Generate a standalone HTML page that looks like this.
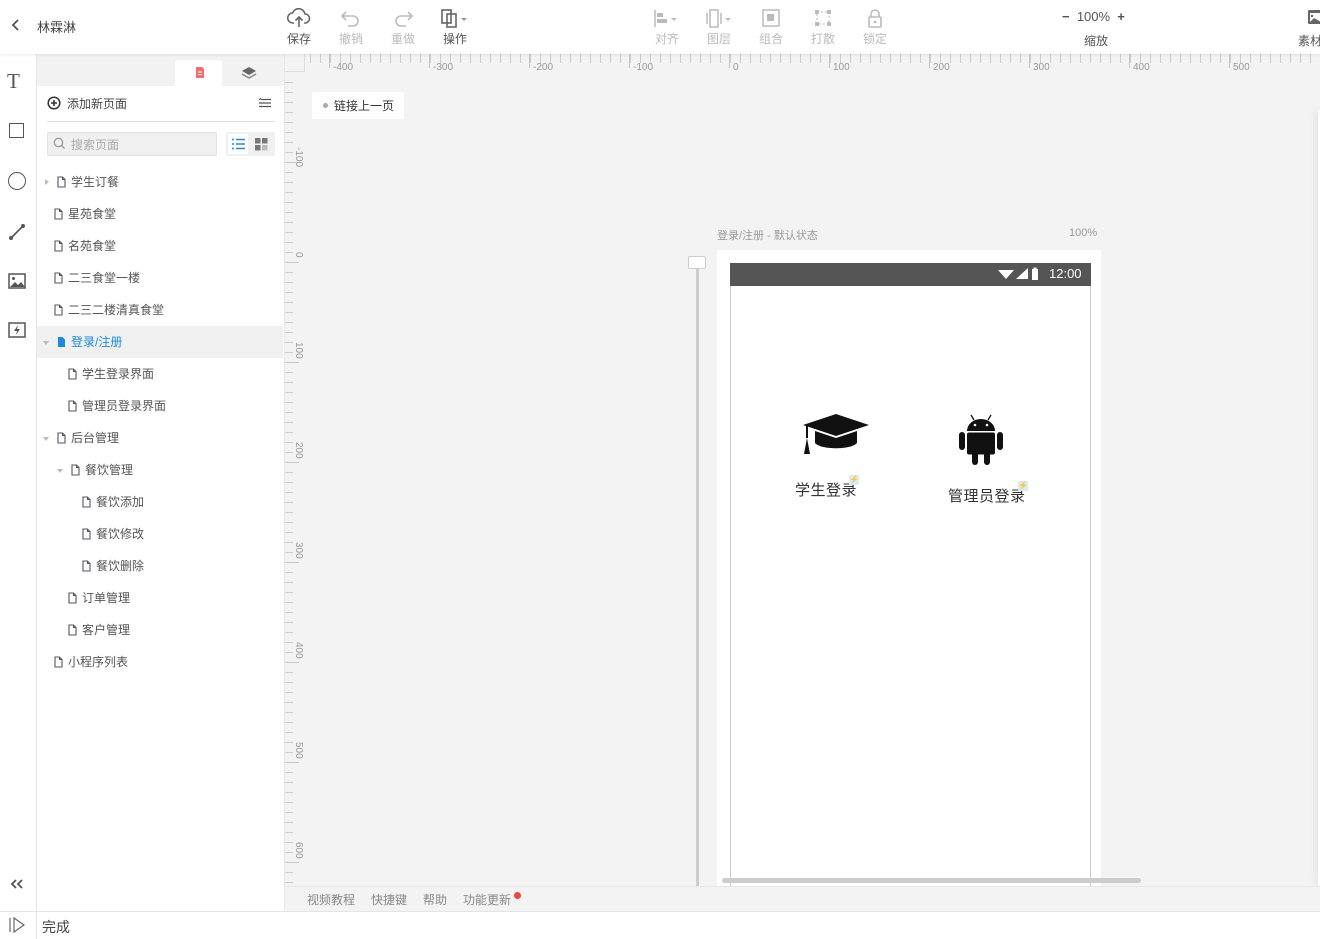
<!DOCTYPE html>
<html><head><meta charset="utf-8"><style>
*{margin:0;padding:0;box-sizing:border-box}
body{width:1320px;height:939px;overflow:hidden;background:#f3f3f3;font-family:"Liberation Sans","Noto Sans CJK SC",sans-serif;font-size:12px;color:#333;position:relative}
.a{position:absolute}
.tb{position:absolute;top:3px;text-align:center;font-size:12px;color:#555;width:40px}
.tb.d{color:#bbb}
.tb svg{display:block;margin:5px auto 0}
.tb span{display:block;margin-top:2px}
.it{position:absolute;font-size:12px;color:#555;height:16px;line-height:16px;white-space:nowrap}
.it svg{position:absolute;top:2px}
.arr{position:absolute;width:0;height:0}
</style></head><body>
<!-- top bar -->
<div class="a" style="left:0;top:0;width:1320px;height:54px;background:#fff;box-shadow:0 1px 3px rgba(0,0,0,.08);z-index:3">
 <svg class="a" style="left:11px;top:19px" width="10" height="12" viewBox="0 0 10 12"><path d="M7 1L2 6l5 5" stroke="#555" stroke-width="1.8" fill="none"/></svg>
 <div class="a" style="left:37px;top:17px;font-size:13px;color:#444">林霖淋</div>
 <div class="tb" style="left:279px"><svg width="24" height="20" viewBox="0 0 24 20"><path d="M7 15H6a5 5 0 0 1-.5-10A6.5 6.5 0 0 1 18 6a4.5 4.5 0 0 1 0 9h-1" fill="none" stroke="#666" stroke-width="1.6"/><path d="M12 19V9M8.5 12.5L12 9l3.5 3.5" fill="none" stroke="#666" stroke-width="1.6"/></svg><span>保存</span></div>
 <div class="tb d" style="left:331px"><svg width="22" height="20" viewBox="0 0 22 20"><path d="M6 4L2 8l4 4M2 8h11a5 5 0 0 1 0 10H8" fill="none" stroke="#bbb" stroke-width="1.6"/></svg><span>撤销</span></div>
 <div class="tb d" style="left:383px"><svg width="22" height="20" viewBox="0 0 22 20"><path d="M16 4l4 4-4 4M20 8H9a5 5 0 0 0 0 10h5" fill="none" stroke="#bbb" stroke-width="1.6"/></svg><span>重做</span></div>
 <div class="tb" style="left:435px"><svg width="32" height="20" viewBox="0 0 32 20"><rect x="3" y="2" width="9" height="13" fill="none" stroke="#666" stroke-width="1.6"/><rect x="8" y="6" width="9" height="13" fill="none" stroke="#666" stroke-width="1.6"/><path d="M22 10h6l-3 3z" fill="#999"/></svg><span>操作</span></div>
 <div class="tb d" style="left:647px"><svg width="32" height="20" viewBox="0 0 32 20"><path d="M4 2v17" stroke="#bbb" stroke-width="1.5"/><rect x="6" y="5" width="6" height="4" fill="#bbb"/><rect x="6" y="11" width="10" height="4" fill="#bbb"/><path d="M20 10h6l-3 3z" fill="#bbb"/></svg><span>对齐</span></div>
 <div class="tb d" style="left:699px"><svg width="32" height="20" viewBox="0 0 32 20"><rect x="7" y="2" width="8" height="17" fill="none" stroke="#bbb" stroke-width="1.5"/><path d="M4 5v11M18 5v11" stroke="#bbb" stroke-width="1.5"/><path d="M22 10h6l-3 3z" fill="#bbb"/></svg><span>图层</span></div>
 <div class="tb d" style="left:751px"><svg width="20" height="20" viewBox="0 0 20 20"><rect x="2" y="2" width="16" height="16" fill="none" stroke="#bbb" stroke-width="1.5"/><rect x="6" y="6" width="7" height="7" fill="#bbb"/></svg><span>组合</span></div>
 <div class="tb d" style="left:803px"><svg width="20" height="20" viewBox="0 0 20 20"><rect x="4" y="4" width="12" height="12" fill="none" stroke="#bbb" stroke-width="1" stroke-dasharray="2 2"/><rect x="2" y="2" width="4" height="4" fill="#bbb"/><rect x="14" y="2" width="4" height="4" fill="#bbb"/><rect x="2" y="14" width="4" height="4" fill="#bbb"/><rect x="14" y="14" width="4" height="4" fill="#bbb"/></svg><span>打散</span></div>
 <div class="tb d" style="left:855px"><svg width="20" height="20" viewBox="0 0 20 20"><path d="M6 9V6a4 4 0 0 1 8 0v3" fill="none" stroke="#bbb" stroke-width="1.6"/><rect x="4" y="9" width="12" height="10" rx="1" fill="none" stroke="#bbb" stroke-width="1.6"/><circle cx="10" cy="14" r="1.3" fill="#bbb"/></svg><span>锁定</span></div>
 <div class="a" style="left:1062px;top:9px;font-size:13px;color:#555;white-space:nowrap"><b style="font-weight:bold">−</b>&nbsp; 100% &nbsp;<b>+</b></div>
 <div class="a" style="left:1084px;top:32px;font-size:12px;color:#555">缩放</div>
 <svg class="a" style="left:1307px;top:9px" width="14" height="16" viewBox="0 0 14 16"><rect x="1" y="1" width="14" height="14" rx="1" fill="#666"/><rect x="3" y="4" width="11" height="9" fill="#fff"/><circle cx="5" cy="7" r="1.2" fill="#666"/><path d="M3 13l4-4 7 4z" fill="#666"/></svg>
 <div class="a" style="left:1298px;top:32px;font-size:12px;color:#555;white-space:nowrap">素材</div>
</div>
<!-- left tools -->
<div class="a" style="left:0;top:54px;width:37px;height:857px;background:#fff;border-right:1px solid #e4e4e4">
 <div class="a" style="left:7px;top:15px;font-family:'Liberation Serif',serif;font-size:21px;color:#555">T</div>
 <div class="a" style="left:9px;top:69px;width:15px;height:15px;border:1.5px solid #555"></div>
 <div class="a" style="left:8px;top:118px;width:18px;height:18px;border:1.5px solid #555;border-radius:50%"></div>
 <svg class="a" style="left:8px;top:169px" width="18" height="18" viewBox="0 0 18 18"><path d="M3 15L15 3" stroke="#555" stroke-width="1.6"/><circle cx="3" cy="15" r="2" fill="#555"/><circle cx="15" cy="3" r="2" fill="#555"/></svg>
 <svg class="a" style="left:8px;top:219px" width="18" height="16" viewBox="0 0 18 16"><rect x="1" y="1" width="16" height="14" fill="none" stroke="#555" stroke-width="1.5"/><circle cx="5.5" cy="5.5" r="1.5" fill="#555"/><path d="M2 14l5-5 3 3 3-3 4 5z" fill="#555"/></svg>
 <svg class="a" style="left:8px;top:268px" width="18" height="16" viewBox="0 0 18 16"><rect x="1" y="1" width="16" height="14" fill="none" stroke="#555" stroke-width="1.5"/><path d="M10 3L6 9h3l-1 4 4-6H9z" fill="#555"/></svg>
 <svg class="a" style="left:10px;top:824px" width="14" height="12" viewBox="0 0 14 12"><path d="M6 2L2 6l4 4M12 2L8 6l4 4" fill="none" stroke="#555" stroke-width="1.8"/></svg>
</div>
<!-- sidebar -->
<div class="a" style="left:37px;top:54px;width:248px;height:857px;background:#fff">
 <div class="a" style="left:0;top:0;width:248px;height:32px;background:#f2f2f2"></div>
 <div class="a" style="left:138px;top:6px;width:47px;height:26px;background:#fff;border-radius:3px 3px 0 0"></div>
 <svg class="a" style="left:158px;top:12px" width="10" height="13" viewBox="0 0 10 13"><path d="M1 1h6l2 2v9H1z" fill="#f56c6c"/><path d="M3 6h4M3 8.5h4" stroke="#fff" stroke-width="1"/></svg>
 <svg class="a" style="left:204px;top:12px" width="16" height="14" viewBox="0 0 16 14"><path d="M8 1l7 4-7 4-7-4z" fill="#666"/><path d="M1 8l7 4 7-4" fill="none" stroke="#888" stroke-width="1.5"/></svg>
 <svg class="a" style="left:10px;top:42px" width="14" height="14" viewBox="0 0 14 14"><circle cx="7" cy="7" r="5.8" fill="none" stroke="#333" stroke-width="1.5"/><path d="M7 4v6M4 7h6" stroke="#333" stroke-width="1.6"/></svg>
 <div class="a" style="left:30px;top:41px;font-size:12px;color:#444">添加新页面</div>
 <svg class="a" style="left:221px;top:44px" width="14" height="11" viewBox="0 0 14 11"><path d="M4 1.5h9M1 5h12M1 8.5h12" stroke="#555" stroke-width="1.3"/><path d="M1 2l1.5-1.5L4 2" fill="none" stroke="#555"/></svg>
 <div class="a" style="left:10px;top:67px;width:228px;height:1px;background:#e0e0e0"></div>
 <div class="a" style="left:10px;top:78px;width:170px;height:24px;background:#f0f0f0;border:1px solid #e2e2e2;border-radius:2px"></div>
 <svg class="a" style="left:16px;top:83px" width="13" height="13" viewBox="0 0 13 13"><circle cx="5.5" cy="5.5" r="4.2" fill="none" stroke="#999" stroke-width="1.3"/><path d="M8.5 8.5l3 3" stroke="#999" stroke-width="1.3"/></svg>
 <div class="a" style="left:34px;top:82px;font-size:12px;color:#aaa">搜索页面</div>
 <div class="a" style="left:189px;top:78px;width:49px;height:24px;background:#f0f0f0;border-radius:2px"></div>
 <div class="a" style="left:191px;top:80px;width:20px;height:20px;background:#fff"></div>
 <svg class="a" style="left:195px;top:84px" width="13" height="12" viewBox="0 0 13 12"><path d="M0 1.5h2M4 1.5h9M0 6h2M4 6h9M0 10.5h2M4 10.5h9" stroke="#1e88e5" stroke-width="1.5"/></svg>
 <svg class="a" style="left:218px;top:84px" width="13" height="13" viewBox="0 0 13 13"><rect x="0" y="0" width="5.5" height="5.5" fill="#777"/><rect x="7" y="0" width="5.5" height="5.5" fill="#777"/><rect x="0" y="7" width="5.5" height="5.5" fill="#777"/><rect x="7" y="7" width="5.5" height="5.5" fill="#bbb"/></svg>
 <div class="a" style="left:0;top:272px;width:246px;height:32px;background:#f0f0f0"></div>
</div>
<div class="a" style="left:284px;top:54px;width:1px;height:857px;background:#e8e8e8"></div>
<!-- tree -->
<svg width="0" height="0" style="position:absolute"><defs><symbol id="f" viewBox="0 0 9 12"><path d="M1 1h4.5L8 3.5V11H1z M5.5 1v2.5H8" fill="none" stroke="#556" stroke-width="1.1"/></symbol><symbol id="fb" viewBox="0 0 9 12"><path d="M1 1h4.5L8 3.5V11H1z" fill="#1e88e5"/></symbol></defs></svg>
<div class="arr" style="left:45px;top:179px;border-left:4px solid #bbb;border-top:3px solid transparent;border-bottom:3px solid transparent"></div>
<div class="it" style="left:57px;top:174px"><svg width="9" height="12"><use href="#f"/></svg><span style="margin-left:14px">学生订餐</span></div>
<div class="it" style="left:54px;top:206px"><svg width="9" height="12"><use href="#f"/></svg><span style="margin-left:14px">星苑食堂</span></div>
<div class="it" style="left:54px;top:238px"><svg width="9" height="12"><use href="#f"/></svg><span style="margin-left:14px">名苑食堂</span></div>
<div class="it" style="left:54px;top:270px"><svg width="9" height="12"><use href="#f"/></svg><span style="margin-left:14px">二三食堂一楼</span></div>
<div class="it" style="left:54px;top:302px"><svg width="9" height="12"><use href="#f"/></svg><span style="margin-left:14px">二三二楼清真食堂</span></div>
<div class="arr" style="left:43px;top:341px;border-top:4px solid #bbb;border-left:3.5px solid transparent;border-right:3.5px solid transparent"></div>
<div class="it" style="left:57px;top:334px;color:#1e88e5"><svg width="9" height="12"><use href="#fb"/></svg><span style="margin-left:14px">登录/注册</span></div>
<div class="it" style="left:68px;top:366px"><svg width="9" height="12"><use href="#f"/></svg><span style="margin-left:14px">学生登录界面</span></div>
<div class="it" style="left:68px;top:398px"><svg width="9" height="12"><use href="#f"/></svg><span style="margin-left:14px">管理员登录界面</span></div>
<div class="arr" style="left:43px;top:437px;border-top:4px solid #bbb;border-left:3.5px solid transparent;border-right:3.5px solid transparent"></div>
<div class="it" style="left:57px;top:430px"><svg width="9" height="12"><use href="#f"/></svg><span style="margin-left:14px">后台管理</span></div>
<div class="arr" style="left:57px;top:469px;border-top:4px solid #bbb;border-left:3.5px solid transparent;border-right:3.5px solid transparent"></div>
<div class="it" style="left:71px;top:462px"><svg width="9" height="12"><use href="#f"/></svg><span style="margin-left:14px">餐饮管理</span></div>
<div class="it" style="left:82px;top:494px"><svg width="9" height="12"><use href="#f"/></svg><span style="margin-left:14px">餐饮添加</span></div>
<div class="it" style="left:82px;top:526px"><svg width="9" height="12"><use href="#f"/></svg><span style="margin-left:14px">餐饮修改</span></div>
<div class="it" style="left:82px;top:558px"><svg width="9" height="12"><use href="#f"/></svg><span style="margin-left:14px">餐饮删除</span></div>
<div class="it" style="left:68px;top:590px"><svg width="9" height="12"><use href="#f"/></svg><span style="margin-left:14px">订单管理</span></div>
<div class="it" style="left:68px;top:622px"><svg width="9" height="12"><use href="#f"/></svg><span style="margin-left:14px">客户管理</span></div>
<div class="it" style="left:54px;top:654px"><svg width="9" height="12"><use href="#f"/></svg><span style="margin-left:14px">小程序列表</span></div>
<!-- rulers -->
<div class="a" style="left:305px;top:54px;width:1015px;height:9px;background:repeating-linear-gradient(90deg,transparent 0 5px,#ccc 5px 6px,transparent 6px 10px)"></div>
<div class="a" style="left:305px;top:54px;width:1015px;height:14px;background:repeating-linear-gradient(90deg,transparent 0 24px,#c8c8c8 24px 25px,transparent 25px 100px)"></div>
<div class="a" style="left:285px;top:54px;width:20px;height:18px;border-right:1px solid #ddd;border-bottom:1px solid #ddd"></div>
<div class="a" style="left:285px;top:73px;width:8px;height:813px;background:repeating-linear-gradient(180deg,transparent 0 9px,#ccc 9px 10px)"></div>
<div class="a" style="left:285px;top:73px;width:14px;height:813px;background:repeating-linear-gradient(180deg,transparent 0 89px,#c8c8c8 89px 90px,transparent 90px 100px)"></div>
<div class="a" style="top:62px;left:0;font-size:10px;color:#999">
 <span class="a" style="left:333px">-400</span><span class="a" style="left:433px">-300</span><span class="a" style="left:533px">-200</span><span class="a" style="left:633px">-100</span><span class="a" style="left:733px">0</span><span class="a" style="left:833px">100</span><span class="a" style="left:933px">200</span><span class="a" style="left:1033px">300</span><span class="a" style="left:1133px">400</span><span class="a" style="left:1233px">500</span>
</div>
<div class="a" style="left:292px;top:0;font-size:10px;color:#999">
 <span class="a" style="top:147px;transform:rotate(90deg);transform-origin:left top;left:12px">-100</span>
 <span class="a" style="top:252px;transform:rotate(90deg);transform-origin:left top;left:12px">0</span>
 <span class="a" style="top:342px;transform:rotate(90deg);transform-origin:left top;left:12px">100</span>
 <span class="a" style="top:442px;transform:rotate(90deg);transform-origin:left top;left:12px">200</span>
 <span class="a" style="top:542px;transform:rotate(90deg);transform-origin:left top;left:12px">300</span>
 <span class="a" style="top:642px;transform:rotate(90deg);transform-origin:left top;left:12px">400</span>
 <span class="a" style="top:742px;transform:rotate(90deg);transform-origin:left top;left:12px">500</span>
 <span class="a" style="top:842px;transform:rotate(90deg);transform-origin:left top;left:12px">600</span>
</div>
<!-- link -->
<div class="a" style="left:312px;top:92px;width:92px;height:27px;background:#fff;border-radius:2px"></div>
<div class="a" style="left:323px;top:103px;width:5px;height:5px;border-radius:50%;background:#aaa"></div>
<div class="a" style="left:334px;top:97px;font-size:12px;color:#333">链接上一页</div>
<!-- canvas page -->
<div class="a" style="left:717px;top:227px;font-size:11px;color:#999">登录/注册 - 默认状态</div>
<div class="a" style="left:1069px;top:227px;font-size:11px;color:#999">100%</div>
<div class="a" style="left:717px;top:250px;width:384px;height:636px;background:#fff"></div>
<div class="a" style="left:696px;top:263px;width:3px;height:623px;background:#ccc"></div>
<div class="a" style="left:688px;top:256px;width:18px;height:13px;background:#fff;border:1px solid #ccc;border-radius:2px"></div>
<div class="a" style="left:730px;top:263px;width:361px;height:623px;border:1px solid #ccc;border-bottom:none;background:#fff"></div>
<div class="a" style="left:730px;top:263px;width:361px;height:23px;background:#555"></div>
<svg class="a" style="left:998px;top:267px" width="48" height="14" viewBox="0 0 48 14"><path d="M0 3h16L8 12z" fill="#fff"/><path d="M18 12L30 1v11z" fill="#fff"/><rect x="34" y="2" width="6" height="11" fill="#fff"/><rect x="35.5" y="0.5" width="3" height="2" fill="#fff"/></svg>
<div class="a" style="left:1049px;top:266px;font-size:13px;color:#fff">12:00</div>
<svg class="a" style="left:801px;top:413px" width="70" height="42" viewBox="0 0 70 42"><path d="M35 1L68 12 35 23 2 12z" fill="#111"/><path d="M14 18v12c6 7 36 7 42 0V18L35 25z" fill="#111"/><path d="M6 13v12" stroke="#111" stroke-width="2"/><path d="M3 41l3-16 3 16z" fill="#111"/></svg>
<svg class="a" style="left:959px;top:413px" width="44" height="52" viewBox="0 0 44 52"><path d="M12 2l3 5M32 2l-3 5" stroke="#111" stroke-width="1.3"/><path d="M8 18a14 12 0 0 1 28 0z" fill="#111"/><circle cx="16" cy="12" r="1.3" fill="#fff"/><circle cx="28" cy="12" r="1.3" fill="#fff"/><rect x="8" y="19.5" width="28" height="22" rx="2" fill="#111"/><rect x="0" y="19" width="6" height="18" rx="3" fill="#111"/><rect x="38" y="19" width="6" height="18" rx="3" fill="#111"/><rect x="13" y="38" width="6" height="14" rx="3" fill="#111"/><rect x="25" y="38" width="6" height="14" rx="3" fill="#111"/></svg>
<div class="a" style="left:795px;top:479px;font-size:15px;color:#333;letter-spacing:0.5px">学生登录</div>
<div class="a" style="left:849px;top:475px;width:10px;height:10px;background:#d8ebfb;border-radius:1px;color:#1e88e5;font-size:8px;line-height:10px;text-align:center">⚡</div>
<div class="a" style="left:948px;top:485px;font-size:15px;color:#333;letter-spacing:0.5px">管理员登录</div>
<div class="a" style="left:1018px;top:481px;width:10px;height:10px;background:#d8ebfb;border-radius:1px;color:#1e88e5;font-size:8px;line-height:10px;text-align:center">⚡</div>
<div class="a" style="left:722px;top:878px;width:419px;height:5px;background:#ccc;border-radius:3px"></div>
<div class="a" style="left:1318px;top:110px;width:10px;height:776px;background:#fff;box-shadow:-3px 0 8px rgba(0,0,0,.06)"></div>
<!-- bottom links -->
<div class="a" style="left:285px;top:886px;width:1035px;height:25px;background:#f3f3f3;border-top:1px solid #e6e6e6"></div>
<div class="a" style="left:307px;top:891px;font-size:12px;color:#888">视频教程</div>
<div class="a" style="left:371px;top:891px;font-size:12px;color:#888">快捷键</div>
<div class="a" style="left:423px;top:891px;font-size:12px;color:#888">帮助</div>
<div class="a" style="left:463px;top:891px;font-size:12px;color:#888">功能更新</div>
<div class="a" style="left:514px;top:892px;width:7px;height:7px;border-radius:50%;background:#f0443c"></div>
<!-- footer -->
<div class="a" style="left:0;top:911px;width:1320px;height:28px;background:#fff;border-top:1px solid #e4e4e4"></div>
<div class="a" style="left:36px;top:912px;width:1px;height:27px;background:#e4e4e4"></div>
<svg class="a" style="left:8px;top:917px" width="18" height="16" viewBox="0 0 18 16"><path d="M2 1v14" stroke="#666" stroke-width="1.2"/><path d="M6 1l10 7-10 7z" fill="none" stroke="#666" stroke-width="1.2"/></svg>
<div class="a" style="left:42px;top:917px;font-size:14px;color:#444">完成</div>
</body></html>
